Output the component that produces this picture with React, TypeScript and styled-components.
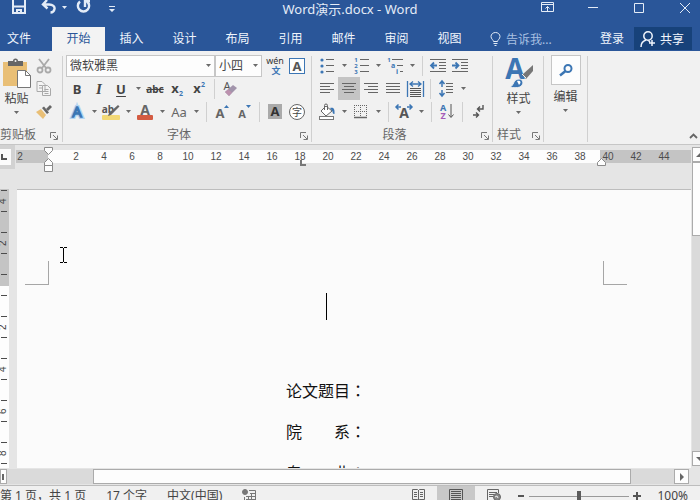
import React from "react";
import styled, { createGlobalStyle, css } from "styled-components";

const blue = "#2a5699";
const ink = "#444444";
const accent = "#3c76b4";
const line = "#c6c6c6";

const Global = createGlobalStyle`
  * { box-sizing: border-box; }
  html, body { margin: 0; padding: 0; }
  body, button, select, input {
    font-family: "Noto Sans", "Noto Sans CJK SC", sans-serif;
    font-size: 12px;
    color: ${ink};
  }
  button { border: 0; padding: 0; background: none; }
  svg { display: block; flex: none; overflow: visible; }
`;

const Window = styled.div`
  height: 100vh;
  display: flex;
  flex-direction: column;
  overflow: hidden;
  background: #e5e5e5;
`;

/* ---------- title bar ---------- */

const TitleBar = styled.header`
  display: grid;
  grid-template-columns: 1fr auto 1fr;
  height: 27px;
  flex: none;
  background: ${blue};
  overflow: hidden;
`;

const QuickAccess = styled.div`
  display: flex;
  height: 14px;
  gap: 9px;
  padding-left: 11px;
`;

const TitleButton = styled.button`
  display: flex;
  align-items: center;
  gap: 6px;
  height: 14px;
`;

const MoreButton = styled(TitleButton)`
  margin-left: 8px;
  padding-top: 4px;
`;

const Title = styled.h1`
  margin: 0;
  font-size: 13px;
  line-height: 19px;
  font-weight: 400;
  color: #e4ecf7;
`;

const WindowControls = styled.div`
  display: flex;
  justify-content: flex-end;
  margin-right: -8px;
`;

const ControlButton = styled.button`
  display: flex;
  justify-content: center;
  align-items: center;
  flex: none;
  width: 46px;
  height: 15px;
`;

/* ---------- tabs ---------- */

const TabBar = styled.nav`
  display: flex;
  align-items: stretch;
  height: 24px;
  flex: none;
  background: ${blue};
  padding-right: 8px;
`;

const Tab = styled.button<{ $active?: boolean; $file?: boolean }>`
  width: ${(p) => (p.$file ? 38 : 53)}px;
  margin-right: ${(p) => (p.$file ? 14 : 0)}px;
  flex: none;
  line-height: 22px;
  white-space: nowrap;
  color: ${(p) => (p.$active ? blue : "#f0f5fc")};
  background: ${(p) => (p.$active ? "#f3f3f3" : "transparent")};
`;

const TellMe = styled.label`
  display: flex;
  flex: 1;
  min-width: 0;
  align-items: center;
  gap: 5px;
  padding-left: 14px;
  color: #b4c8e6;
`;

const TellMeInput = styled.input`
  flex: 1;
  min-width: 0;
  border: 0;
  padding: 0;
  height: 20px;
  outline: none;
  background: none;
  color: #ffffff;
  &::placeholder { color: #a9c0e2; opacity: 1; }
`;

const SignIn = styled.button`
  flex: none;
  width: 44px;
  line-height: 22px;
  color: #f0f5fc;
`;

const Share = styled.button`
  display: flex;
  align-items: center;
  gap: 4px;
  flex: none;
  height: 23px;
  padding: 0 8px 0 6px;
  background: #17427a;
  color: #f0f5fc;
`;

/* ---------- ribbon ---------- */

const Ribbon = styled.section`
  display: flex;
  flex: none;
  height: 94px;
  padding: 3px 0 0;
  background: #f1f1f1;
  border-bottom: 1px solid ${line};
`;

const Group = styled.div<{ $w: number; $pad: number }>`
  display: flex;
  flex-direction: column;
  flex: none;
  width: ${(p) => p.$w}px;
  padding: 0 ${(p) => (p.$pad ? 0 : 1)}px 0 ${(p) => p.$pad}px;
  background: linear-gradient(#d0d0d0, #d0d0d0) right 2px / 1px 86px no-repeat;
`;

const GroupBody = styled.div`
  display: flex;
  height: 69px;
`;

const Rows = styled.div`
  display: flex;
  flex-direction: column;
`;

const Row = styled.div`
  display: flex;
  align-items: center;
  height: 23px;
`;

const GroupFooter = styled.div`
  display: flex;
  align-items: center;
  height: 20px;
  padding: 2px 4px 0 0;
  color: #666666;
  white-space: nowrap;
`;

const GroupName = styled.span<{ $center?: boolean }>`
  flex: 1;
  padding-right: ${(p) => (p.$center ? 8 : 0)}px;
  text-align: ${(p) => (p.$center ? "center" : "left")};
`;

const Launcher = styled.button`
  flex: none;
  padding-top: 4px;
`;

const Tool = styled.button<{ $on?: boolean }>`
  display: flex;
  align-items: center;
  justify-content: center;
  flex: none;
  width: 22px;
  height: 23px;
  background: ${(p) => (p.$on ? "#c4c4c4" : "transparent")};
`;

const CaretTool = styled(Tool)`
  width: 12px;
`;

const Divider = styled.i`
  flex: none;
  width: 1px;
  height: 20px;
  margin: 0 4px;
  background: #d0d0d0;
`;

const Combo = styled.label<{ $w: number }>`
  display: grid;
  align-items: center;
  flex: none;
  width: ${(p) => p.$w}px;
  height: 22px;
  margin-right: ${(p) => (p.$w < 60 ? 2 : 0)}px;
  & > * { grid-area: 1 / 1; }
  & > svg { justify-self: end; margin-right: 4px; pointer-events: none; }
`;

const ComboSelect = styled.select`
  appearance: none;
  width: 100%;
  height: 22px;
  border: 1px solid ${line};
  border-radius: 0;
  padding: 0 0 0 3px;
  background: #fdfdfd;
`;

const BigButton = styled.button<{ $w: number }>`
  display: flex;
  flex-direction: column;
  align-items: center;
  flex: none;
  width: ${(p) => p.$w}px;
  padding-top: 4px;
  line-height: 18px;
  white-space: nowrap;
`;

const BigLabel = styled.span`
  margin: 2px 0 3px;
`;

const FindBox = styled.span`
  display: flex;
  align-items: center;
  justify-content: center;
  width: 30px;
  height: 30px;
  margin: -3px 0 1px;
  border: 1px solid ${line};
  background: #fdfdfd;
`;

const Collapse = styled.button`
  align-self: flex-end;
  margin-left: auto;
  padding: 0 2px 5px 0;
`;

const letter = css`
  font-size: 13px;
  line-height: 20px;
  color: #444444;
`;
const Bold = styled.b`${letter}`;
const Italic = styled.i`${letter} font-family: "Liberation Serif", serif; font-weight: 700; font-size: 15px;`;
const Underline = styled.span`${letter} font-weight: 700; text-decoration: underline; text-underline-offset: 2px;`;
const Strike = styled.s`${letter} font-size: 10px; font-weight: 700;`;
const CaseLabel = styled.span`${letter} color: #666666;`;

/* ---------- workspace ---------- */

const Workspace = styled.main`
  display: flex;
  flex: 1;
  min-height: 0;
`;

const Editor = styled.div`
  display: flex;
  flex-direction: column;
  flex: 1;
  min-width: 0;
`;

const RulerBar = styled.div`
  display: flex;
  align-items: flex-start;
  height: 44px;
  flex: none;
`;

const TabStop = styled.button`
  display: flex;
  justify-content: flex-start;
  align-items: center;
  width: 15px;
  height: 24px;
  flex: none;
  margin-right: 1px;
  background: #fbfbfb;
  border: 4px solid #d2d2d2;
  border-left: 0;
`;

const Ruler = styled.div`
  position: relative;
  flex: 1;
  min-width: 0;
  height: 13px;
  margin-top: 5px;
  background: linear-gradient(90deg, #c4c4c4 32px, #fdfdfd 32px, #fdfdfd 584px, #c4c4c4 584px);
`;

const RulerScale = styled.div`
  display: flex;
  margin-left: -10px;
`;

const RulerMark = styled.span`
  flex: none;
  width: 28px;
  text-align: center;
  font: 10px/14px "Liberation Sans", sans-serif;
  color: #4c4c4c;
`;

const Marker = styled.svg<{ $x: number; $y: number }>`
  position: absolute;
  left: ${(p) => p.$x}px;
  top: ${(p) => p.$y}px;
`;

const PageRow = styled.div`
  display: flex;
  flex: 1;
  min-height: 0;
  gap: 8px;
  overflow: hidden;
`;

const SideRuler = styled.div`
  flex: none;
  width: 9px;
  overflow: hidden;
  background: linear-gradient(#c4c4c4 97px, #fdfdfd 97px);
`;

const SideScale = styled.div`
  margin-top: -9px;
`;

const SideMark = styled.div`
  display: flex;
  flex-direction: column;
  justify-content: space-between;
  height: 42px;
  padding: 10px 0;
  &::before, &::after {
    content: "";
    width: 6px;
    height: 1px;
    margin-left: 1px;
    background: #4c4c4c;
  }
`;

const SideNumber = styled.span`
  width: 12px;
  height: 10px;
  margin-left: -3px;
  writing-mode: vertical-rl;
  rotate: 180deg;
  text-align: center;
  font: 10px/12px "Liberation Sans", sans-serif;
`;

const Page = styled.article`
  position: relative;
  flex: 1;
  min-width: 0;
  overflow: hidden;
  background: #fbfbfb;
  border-top: 1px solid #bdbdbd;
  padding: 71px 0 0 8px;
`;

const Corners = styled.div`
  display: flex;
  gap: 554px;
`;

const Corner = styled.i<{ $side: "left" | "right" }>`
  flex: none;
  width: 24px;
  height: 24px;
  border: 0 solid #a6a6a6;
  border-bottom-width: 1px;
  ${(p) => (p.$side === "left" ? "border-right-width: 1px;" : "border-left-width: 1px;")}
`;

const TextArea = styled.div`
  width: 554px;
  margin-left: 24px;
  padding-top: 8px;
`;

const CaretLine = styled.div`
  display: flex;
  justify-content: center;
  height: 77px;
`;

const TextCaret = styled.i`
  width: 1px;
  height: 27px;
  background: #000000;
`;

const Paragraph = styled.p`
  margin: 0;
  height: 41px;
  padding-left: 237px;
  font-family: "Noto Sans CJK SC", sans-serif;
  font-size: 16px;
  line-height: 41px;
  white-space: pre;
  color: #111111;
`;

const Colon = styled.span`
  font-family: "Noto Sans CJK TC", sans-serif;
  line-height: 1;
`;

const Pointer = styled.svg`
  position: absolute;
  left: 43px;
  top: 57px;
`;

/* ---------- scroll bars ---------- */

const VScroll = styled.div`
  display: flex;
  flex-direction: column;
  width: 9px;
  flex: none;
  overflow: hidden;
  margin: 2px 0;
  background: #dadada;
  border-left: 1px solid #e5e5e5;
`;

const ScrollButton = styled.button<{ $w: number }>`
  display: flex;
  align-items: center;
  justify-content: center;
  flex: none;
  width: ${(p) => p.$w}px;
  height: 15px;
  background: #fdfdfd;
  border: 1px solid #ababab;
`;

const VThumb = styled.div`
  width: 16px;
  height: 74px;
  margin-bottom: auto;
  background: #fdfdfd;
  border: 1px solid #ababab;
`;

const HScroll = styled.div`
  display: flex;
  flex: none;
  height: 17px;
  padding: 1px 11px 1px 0;
  background: #e5e5e5;
`;

const HTrack = styled.div`
  flex: 1;
  padding: 0 43px 0 86px;
  background: #dadada;
`;

const HThumb = styled.div`
  height: 15px;
  background: #fdfdfd;
  border: 1px solid #ababab;
`;

/* ---------- status bar ---------- */

const StatusBar = styled.footer`
  display: flex;
  flex: none;
  height: 15px;
  overflow: hidden;
  border-top: 1px solid #bdbdbd;
  background: #f0f0f0;
  line-height: 20px;
  white-space: nowrap;
`;

const StatusItem = styled.button`
  flex: none;
  height: 20px;
  line-height: 20px;
  margin-right: 20px;
`;

const StatusRight = styled.div`
  display: flex;
  align-items: flex-start;
  margin-left: auto;
  padding-right: 12px;
`;

const ViewButton = styled.button<{ $on?: boolean }>`
  display: flex;
  justify-content: center;
  width: 38px;
  height: 20px;
  padding-top: 3px;
  background: ${(p) => (p.$on ? "#c8c8c8" : "transparent")};
`;

const ZoomButton = styled.button`
  display: flex;
  align-items: center;
  justify-content: center;
  width: 16px;
  height: 20px;
`;

const ZoomSlider = styled.input`
  appearance: none;
  width: 100px;
  height: 20px;
  margin: 0;
  background: linear-gradient(#9a9a9a, #9a9a9a) center / 100% 1px no-repeat;
  &::-webkit-slider-thumb {
    appearance: none;
    width: 4px;
    height: 11px;
    background: #5c5c5c;
  }
`;

const ZoomValue = styled.button`
  width: 43px;
  height: 20px;
  line-height: 20px;
  text-align: right;
`;

/* ---------- drawings ---------- */

const Caret = ({ color = "#6a6a6a" }: { color?: string }) => (
  <svg width="5" height="3" viewBox="0 0 5 3"><path d="M0 0h5L2.5 3z" fill={color} /></svg>
);

const LauncherIcon = () => (
  <svg width="8" height="8" viewBox="0 0 8 8" fill="none" stroke="#777">
    <path d="M.5 6V.5H6M3 3l4 4M7.5 3.5v4h-4" />
  </svg>
);

const Drop = ({ label }: { label: string }) => (
  <CaretTool aria-label={label}><Caret /></CaretTool>
);

const Lines = ({ rows }: { rows: [number, number][] }) => (
  <svg width="16" height="11" viewBox="0 0 16 11" stroke="#666">
    {rows.map(([a, b], i) => <path key={i} d={`M${a} ${i * 3 + 0.5}H${b}`} />)}
  </svg>
);

const SvgLetter = ({ x, y, size, fill = "#555", bold = true, children }: {
  x: number; y: number; size: number; fill?: string; bold?: boolean; children: string;
}) => (
  <text x={x} y={y} fontSize={size} fill={fill} fontWeight={bold ? 700 : 400} textAnchor="middle">{children}</text>
);

const PasteIcon = () => (
  <svg width="30" height="30" viewBox="0 0 30 30">
    <rect x="1" y="4" width="24" height="24" fill="#e9bf76" />
    <path d="M6 3h5a2.500 2.500 0 0 1 5 0h5v5H6z" fill="#666" />
    <circle cx="13.500" cy="3" r="1" fill="#f1f1f1" />
    <path d="M15.500 12.500h8l5 5v12h-13z" fill="#fff" stroke="#777" />
    <path d="M23.500 12.500v5h5" fill="none" stroke="#777" />
  </svg>
);

const CutIcon = () => (
  <svg width="16" height="16" viewBox="0 0 16 16" fill="none" stroke="#a9a9a9" strokeWidth="1.800">
    <path d="M3 1l7 9M13 1L6 10" /><circle cx="4" cy="12" r="2.500" /><circle cx="12" cy="12" r="2.500" />
  </svg>
);

const CopyIcon = () => (
  <svg width="16" height="15" viewBox="0 0 16 15" fill="#f4f4f4" stroke="#a9a9a9">
    <path d="M1 .5h5l3 3v7H1zM6.500 4.500h5l3 3v7h-8z" />
    <path d="M3 4.500h3M3 7h3M8.500 8.500h4M8.500 10.500h4M8.500 12.500h4" />
  </svg>
);

const PainterIcon = () => (
  <svg width="16" height="15" viewBox="0 0 16 15">
    <path d="M0 8l5-3 5 6-3 4z" fill="#e9bf76" />
    <path d="M6 4l2-1.500 5 6L11 10z" fill="#666" /><path d="M10 5l4-4 2 2-4 4z" fill="#666" />
  </svg>
);

const PhoneticIcon = () => (
  <svg width="18" height="18" viewBox="0 0 18 18">
    <SvgLetter x={9} y={7} size={9} fill="#333" bold={false}>wén</SvgLetter>
    <SvgLetter x={10} y={17} size={9} fill={accent}>文</SvgLetter>
  </svg>
);

const BoxedA = () => (
  <svg width="16" height="16" viewBox="0 0 16 16">
    <rect x=".5" y=".5" width="15" height="15" fill="#fdfdfd" stroke={accent} />
    <SvgLetter x={8} y={13} size={13}>A</SvgLetter>
  </svg>
);

const Script = ({ sup }: { sup?: boolean }) => (
  <svg width="14" height="14" viewBox="0 0 14 14">
    <SvgLetter x={5} y={11} size={13} fill="#444">x</SvgLetter>
    <SvgLetter x={11} y={sup ? 5 : 14} size={7} fill={accent}>2</SvgLetter>
  </svg>
);

const ClearIcon = () => (
  <svg width="16" height="16" viewBox="0 0 16 16">
    <SvgLetter x={5} y={9} size={11} bold={false}>A</SvgLetter>
    <path d="M3 11l8-7 4 3-8 8z" fill="#a294ab" /><path d="M3 11l3-2.500 4 3L7 15z" fill="#bc91ae" />
  </svg>
);

const EffectA = () => (
  <svg width="18" height="18" viewBox="0 0 18 18">
    <text x="9" y="14" fontSize="15" textAnchor="middle" fill="#fff" stroke="#b4d4f2" strokeWidth="4">A</text>
    <text x="9" y="14" fontSize="15" textAnchor="middle" fill="#fff" stroke={accent} strokeWidth="1.400">A</text>
  </svg>
);

const HighlightIcon = () => (
  <svg width="18" height="18" viewBox="0 0 18 18">
    <rect x="0" y="12" width="18" height="5" rx="1" fill="#f2d875" />
    <SvgLetter x={6} y={10} size={10}>ab</SvgLetter>
    <path d="M16 2l1.500 1.500L9 12l-3 1 1-3z" fill="#666" />
  </svg>
);

const FontColorIcon = () => (
  <svg width="16" height="18" viewBox="0 0 16 18">
    <SvgLetter x={8} y={12} size={14} fill="#666">A</SvgLetter>
    <rect x="0" y="12" width="16" height="5" rx="1" fill="#d35b42" />
  </svg>
);

const SizeA = ({ up }: { up?: boolean }) => (
  <svg width="14" height="16" viewBox="0 0 14 16">
    <SvgLetter x={5} y={14} size={up ? 13 : 11} fill="#666">A</SvgLetter>
    <path d={up ? "M9 4h5l-2.500-3z" : "M9 1h5l-2.500 3z"} fill={accent} />
  </svg>
);

const ShadedA = () => (
  <svg width="14" height="15" viewBox="0 0 14 15">
    <rect width="14" height="15" fill="#aaa" /><SvgLetter x={7} y={12} size={13} fill="#333">A</SvgLetter>
  </svg>
);

const CircledZi = () => (
  <svg width="16" height="16" viewBox="0 0 16 16">
    <circle cx="8" cy="8" r="7.500" fill="#fff" stroke="#666" />
    <SvgLetter x={8} y={12} size={10} fill="#444" bold={false}>字</SvgLetter>
  </svg>
);

const BulletsIcon = () => (
  <svg width="14" height="16" viewBox="0 0 14 16">
    {[2, 8, 14].map((y) => <g key={y}><circle cx="2" cy={y} r="1.600" fill={accent} /><path d={`M6 ${y - 0.5}h8`} stroke="#666" /></g>)}
  </svg>
);

const NumberingIcon = () => (
  <svg width="15" height="16" viewBox="0 0 15 16">
    {[2, 8, 14].map((y, i) => (
      <g key={y}><SvgLetter x={2} y={y + 2} size={6} fill={accent}>{String(i + 1)}</SvgLetter><path d={`M6 ${y - 0.5}h9`} stroke="#666" /></g>
    ))}
  </svg>
);

const MultilevelIcon = () => (
  <svg width="16" height="16" viewBox="0 0 16 16">
    <SvgLetter x={2} y={4} size={6} fill={accent}>1</SvgLetter>
    <SvgLetter x={6} y={10} size={7} fill={accent}>a</SvgLetter>
    <SvgLetter x={10} y={16} size={7} fill={accent}>i</SvgLetter>
    <path d="M5 1.500h11M10 7.500h6M13 13.500h3" stroke="#666" />
  </svg>
);

const IndentIcon = ({ out }: { out?: boolean }) => (
  <svg width="16" height="14" viewBox="0 0 16 14" fill="none">
    <path d="M0 .5h16M9 3.500h7M9 6.500h7M9 9.500h7M0 12.500h16" stroke="#666" />
    <path d={out ? "M7 6.500H1M4 3.500l-3 3 3 3" : "M0 6.500h6M3.500 3.500l3 3-3 3"} stroke={accent} strokeWidth="1.800" />
  </svg>
);

const DistributeIcon = () => (
  <svg width="17" height="16" viewBox="0 0 17 16" fill="none">
    <path d="M.5 0v16M16.500 0v16M3 3h11M6 .5L3 3l3 2.500M11 .5L14 3l-3 2.500" stroke={accent} strokeWidth="1.300" />
    <path d="M3 7.500h11M3 9.500h11M3 11.500h11M3 13.500h11M3 15.500h11" stroke="#555" />
  </svg>
);

const SpacingIcon = () => (
  <svg width="14" height="17" viewBox="0 0 14 17" fill="none">
    <path d="M3 1v6M.5 4L3 1l2.500 3M3 10v6M.5 13L3 16l2.500-3" stroke={accent} strokeWidth="1.500" />
    <path d="M7 3.500h7M7 6.500h7M7 9.500h7M7 12.500h7" stroke="#666" />
  </svg>
);

const ShadingIcon = () => (
  <svg width="16" height="16" viewBox="0 0 16 16" fill="none">
    <path d="M7 2l6 5-6 5-5-5z" fill="#fff" stroke="#666" /><path d="M5.500 6V1.500a1.500 1.500 0 0 1 3 0V6" stroke="#666" />
    <path d="M11 4c3-1 5 0 4.500 6-1 0-2-.5-2-2.500z" fill={accent} />
    <rect x=".5" y="12.500" width="14" height="3" fill="#fff" stroke="#777" />
  </svg>
);

const BordersIcon = () => (
  <svg width="14" height="14" viewBox="0 0 14 14" fill="none" stroke="#666">
    <path d="M.5 0v12M6.500 0v12M12.500 0v12M0 .5h13M0 6.500h13" strokeDasharray="1 1" /><path d="M0 12.500h13" strokeWidth="1.500" />
  </svg>
);

const ScaleAIcon = () => (
  <svg width="16" height="16" viewBox="0 0 16 16">
    <SvgLetter x={8} y={14} size={14} fill="#555">A</SvgLetter>
    <path d="M5 3H0M2.500 .5L0 3l2.500 2.500M11 3h5M13.500.5L16 3l-2.500 2.500" fill="none" stroke={accent} strokeWidth="1.500" />
  </svg>
);

const SortIcon = () => (
  <svg width="14" height="17" viewBox="0 0 14 17">
    <SvgLetter x={3} y={8} size={9} fill={accent}>A</SvgLetter>
    <SvgLetter x={3} y={16} size={9} fill="#a45bb8">Z</SvgLetter>
    <path d="M11 1v13M8.500 11.500L11 14.500l2.500-3" fill="none" stroke="#555" />
  </svg>
);

const MarksIcon = () => (
  <svg width="11" height="13" viewBox="0 0 11 13" fill="none" stroke="#555" strokeWidth="1.400">
    <path d="M10 0v4H5M7 1.500L4.500 4 7 6.500M0 10h5M3 7.500L5.500 10 3 12.500" />
  </svg>
);

const StylesIcon = () => (
  <svg width="28" height="30" viewBox="0 0 28 30">
    <SvgLetter x={10} y={21} size={28} fill={accent}>A</SvgLetter>
    <path d="M28 7v6l-7 8-4-4z" fill="#777" />
    <path d="M17 16l4 4" stroke="#f1f1f1" />
    <path d="M5 29c4-1 3-8 9-8 5 0 5 6 1 8-3 1-7 1-10 0z" fill={accent} stroke="#f1f1f1" />
    <path d="M12 23c3-1 5 1 2 4" fill="#fff" />
  </svg>
);

const FindIcon = () => (
  <svg width="14" height="12" viewBox="0 0 14 12" fill="none" stroke={accent} strokeWidth="2">
    <circle cx="9" cy="4.500" r="3.500" /><path d="M6.500 7L1 11.500" strokeWidth="2.500" />
  </svg>
);

const scale = ["2", "", ...Array.from({ length: 22 }, (_, i) => String(i * 2 + 2))];
const sideScale = ["4", "2", "", "2", "4", "6", "8"];
const tabs = ["插入", "设计", "布局", "引用", "邮件", "审阅", "视图"];

const L: Record<string, [number, number][]> = {
  left: [[1, 15], [1, 11], [1, 15], [1, 11]],
  center: [[1, 15], [3, 13], [1, 15], [3, 13]],
  right: [[1, 15], [5, 15], [1, 15], [5, 15]],
  justify: [[1, 15], [1, 15], [1, 15], [1, 15]],
};

export default function App() {
  return (
    <Window>
      <Global />
      <TitleBar>
        <QuickAccess>
          <TitleButton aria-label="保存">
            <svg width="15" height="14" viewBox="0 0 15 14" fill="none" stroke="#e4ecf7" strokeWidth="2">
              <path d="M2 0v13h12V0M2 6.500h12" /><path d="M6 13v-3h4v3" />
            </svg>
          </TitleButton>
          <TitleButton aria-label="撤消">
            <svg width="21" height="14" viewBox="0 0 21 14" fill="none" stroke="#e4ecf7" strokeWidth="2.400">
              <path d="M12 0L8 4.500l4.500 4M8 4.500h6c4 0 6 2 5.500 4.500-.5 2.500-2 3.500-4 3.500" />
            </svg>
            <Caret color="#e4ecf7" />
          </TitleButton>
          <TitleButton aria-label="恢复">
            <svg width="16" height="14" viewBox="0 0 16 14" fill="none" stroke="#e4ecf7" strokeWidth="2.400">
              <path d="M4 1.500A5.600 5.600 0 1 0 11 1.500M9 7V1h5" />
            </svg>
          </TitleButton>
          <MoreButton aria-label="自定义快速访问工具栏">
            <svg width="6" height="7" viewBox="0 0 6 7"><path d="M0 0h6v1H0zM0 3h6L3 6z" fill="#e4ecf7" /></svg>
          </MoreButton>
        </QuickAccess>
        <Title>Word演示.docx - Word</Title>
        <WindowControls>
          <ControlButton aria-label="功能区显示选项">
            <svg width="13" height="11" viewBox="0 0 13 11" fill="none" stroke="#e4ecf7">
              <path d="M.5.5h12v9H.5zM.5 2.500h12M6.500 9V4.500M4.500 6.500l2-2 2 2" />
            </svg>
          </ControlButton>
          <ControlButton aria-label="最小化">
            <svg width="10" height="1" viewBox="0 0 10 1"><path d="M0 .5h10" stroke="#e4ecf7" /></svg>
          </ControlButton>
          <ControlButton aria-label="最大化">
            <svg width="10" height="10" viewBox="0 0 10 10"><path d="M.5.5h9v9h-9z" fill="none" stroke="#e4ecf7" /></svg>
          </ControlButton>
          <ControlButton aria-label="关闭">
            <svg width="10" height="10" viewBox="0 0 10 10"><path d="M0 0l10 10M10 0L0 10" stroke="#e4ecf7" /></svg>
          </ControlButton>
        </WindowControls>
      </TitleBar>

      <TabBar>
        <Tab $file>文件</Tab>
        <Tab $active>开始</Tab>
        {tabs.map((t) => <Tab key={t}>{t}</Tab>)}
        <TellMe>
          <svg width="11" height="14" viewBox="0 0 11 14" fill="none" stroke="#e4ecf7">
            <path d="M3.500 9.500C3.500 8 1 7 1 4.500a4.500 4 0 0 1 9 0C10 7 7.500 8 7.500 9.500zM3.500 11.500h4M4.500 13.500h2" />
          </svg>
          <TellMeInput placeholder="告诉我..." aria-label="告诉我" />
        </TellMe>
        <SignIn>登录</SignIn>
        <Share>
          <svg width="16" height="16" viewBox="0 0 16 16" fill="none" stroke="#f0f5fc" strokeWidth="1.500">
            <circle cx="8" cy="5" r="4.200" /><path d="M1 16c0-4 2-6 5-7M8.500 9.500l1.500 1.500M12 9v6M9 12h6" />
          </svg>
          共享
        </Share>
      </TabBar>

      <Ribbon>
        <Group $w={63} $pad={0}>
          <GroupBody>
            <BigButton $w={33}>
              <PasteIcon /><BigLabel>粘贴</BigLabel><Caret />
            </BigButton>
            <Rows>
              <Row><Tool aria-label="剪切"><CutIcon /></Tool></Row>
              <Row><Tool aria-label="复制"><CopyIcon /></Tool></Row>
              <Row><Tool aria-label="格式刷"><PainterIcon /></Tool></Row>
            </Rows>
          </GroupBody>
          <GroupFooter>
            <GroupName>剪贴板</GroupName>
            <Launcher aria-label="剪贴板选项"><LauncherIcon /></Launcher>
          </GroupFooter>
        </Group>

        <Group $w={249} $pad={3}>
          <GroupBody>
            <Rows>
              <Row>
                <Combo $w={149}>
                  <ComboSelect aria-label="字体"><option>微软雅黑</option></ComboSelect><Caret />
                </Combo>
                <Combo $w={47}>
                  <ComboSelect aria-label="字号"><option>小四</option></ComboSelect><Caret />
                </Combo>
                <Tool aria-label="拼音指南"><PhoneticIcon /></Tool>
                <Tool aria-label="字符边框"><BoxedA /></Tool>
              </Row>
              <Row>
                <Tool><Bold>B</Bold></Tool>
                <Tool><Italic>I</Italic></Tool>
                <Tool><Underline>U</Underline></Tool>
                <Drop label="下划线选项" />
                <Tool><Strike>abc</Strike></Tool>
                <Tool aria-label="下标"><Script /></Tool>
                <Tool aria-label="上标"><Script sup /></Tool>
                <Divider />
                <Tool aria-label="清除格式"><ClearIcon /></Tool>
              </Row>
              <Row>
                <Tool aria-label="文本效果"><EffectA /></Tool>
                <Drop label="文本效果选项" />
                <Tool aria-label="突出显示"><HighlightIcon /></Tool>
                <Drop label="突出显示选项" />
                <Tool aria-label="字体颜色"><FontColorIcon /></Tool>
                <Drop label="字体颜色选项" />
                <Tool><CaseLabel>Aa</CaseLabel></Tool>
                <Drop label="更改大小写" />
                <Divider />
                <Tool aria-label="增大字号"><SizeA up /></Tool>
                <Tool aria-label="减小字号"><SizeA /></Tool>
                <Divider />
                <Tool aria-label="字符底纹"><ShadedA /></Tool>
                <Tool aria-label="带圈字符"><CircledZi /></Tool>
              </Row>
            </Rows>
          </GroupBody>
          <GroupFooter>
            <GroupName $center>字体</GroupName>
            <Launcher aria-label="字体选项"><LauncherIcon /></Launcher>
          </GroupFooter>
        </Group>

        <Group $w={181} $pad={4}>
          <GroupBody>
            <Rows>
              <Row>
                <Tool aria-label="项目符号"><BulletsIcon /></Tool>
                <Drop label="项目符号选项" />
                <Tool aria-label="编号"><NumberingIcon /></Tool>
                <Drop label="编号选项" />
                <Tool aria-label="多级列表"><MultilevelIcon /></Tool>
                <Drop label="多级列表选项" />
                <Divider />
                <Tool aria-label="减少缩进量"><IndentIcon out /></Tool>
                <Tool aria-label="增加缩进量"><IndentIcon /></Tool>
              </Row>
              <Row>
                <Tool aria-label="左对齐"><Lines rows={L.left} /></Tool>
                <Tool aria-label="居中" $on><Lines rows={L.center} /></Tool>
                <Tool aria-label="右对齐"><Lines rows={L.right} /></Tool>
                <Tool aria-label="两端对齐"><Lines rows={L.justify} /></Tool>
                <Tool aria-label="分散对齐"><DistributeIcon /></Tool>
                <Divider />
                <Tool aria-label="行距"><SpacingIcon /></Tool>
                <Drop label="行距选项" />
              </Row>
              <Row>
                <Tool aria-label="底纹"><ShadingIcon /></Tool>
                <Drop label="底纹选项" />
                <Tool aria-label="边框"><BordersIcon /></Tool>
                <Drop label="边框选项" />
                <Divider />
                <Tool aria-label="中文版式"><ScaleAIcon /></Tool>
                <Drop label="中文版式选项" />
                <Divider />
                <Tool aria-label="排序"><SortIcon /></Tool>
                <Divider />
                <Tool aria-label="显示编辑标记"><MarksIcon /></Tool>
              </Row>
            </Rows>
          </GroupBody>
          <GroupFooter>
            <GroupName $center>段落</GroupName>
            <Launcher aria-label="段落选项"><LauncherIcon /></Launcher>
          </GroupFooter>
        </Group>

        <Group $w={51} $pad={4}>
          <GroupBody>
            <BigButton $w={43}>
              <StylesIcon /><BigLabel>样式</BigLabel><Caret />
            </BigButton>
          </GroupBody>
          <GroupFooter>
            <GroupName>样式</GroupName>
            <Launcher aria-label="样式选项"><LauncherIcon /></Launcher>
          </GroupFooter>
        </Group>

        <Group $w={44} $pad={0}>
          <GroupBody>
            <BigButton $w={43}>
              <FindBox><FindIcon /></FindBox><BigLabel>编辑</BigLabel><Caret />
            </BigButton>
          </GroupBody>
        </Group>

        <Collapse aria-label="折叠功能区">
          <svg width="9" height="6" viewBox="0 0 9 6"><path d="M1 5l3.500-3.500L8 5" fill="none" stroke="#666" strokeWidth="1.800" /></svg>
        </Collapse>
      </Ribbon>

      <Workspace>
        <Editor>
          <RulerBar>
            <TabStop aria-label="制表符">
              <svg width="7" height="8" viewBox="0 0 7 8"><path d="M2 1v5h5" fill="none" stroke="#555" strokeWidth="2" /></svg>
            </TabStop>
            <Ruler>
              <RulerScale>{scale.map((n, i) => <RulerMark key={i}>{n}</RulerMark>)}</RulerScale>
              <Marker $x={28} $y={-3} width="9" height="25" viewBox="0 0 9 25" fill="#fdfdfd" stroke="#8a8a8a">
                <path d="M.5.5h8v3l-4 4-4-4zM.5 18.500v-3l4-4 4 4v3zM.5 18.500h8v6h-8z" />
              </Marker>
              <Marker $x={284} $y={10} width="6" height="6" viewBox="0 0 6 6"><path d="M1 0v5h5" fill="none" stroke="#777" strokeWidth="2" /></Marker>
              <Marker $x={581} $y={8} width="9" height="8" viewBox="0 0 9 8" fill="#fdfdfd" stroke="#8a8a8a">
                <path d="M.5 7.500v-3l4-4 4 4v3z" />
              </Marker>
            </Ruler>
          </RulerBar>
          <PageRow>
            <SideRuler>
              <SideScale>
                {sideScale.map((n, i) => <SideMark key={i}><SideNumber>{n}</SideNumber></SideMark>)}
              </SideScale>
            </SideRuler>
            <Page>
              <Corners><Corner $side="left" /><Corner $side="right" /></Corners>
              <TextArea>
                <CaretLine><TextCaret /></CaretLine>
                <Paragraph>论文题目<Colon>：</Colon></Paragraph>
                <Paragraph>院　　系<Colon>：</Colon></Paragraph>
                <Paragraph>专　　业<Colon>：</Colon></Paragraph>
              </TextArea>
              <Pointer width="7" height="16" viewBox="0 0 7 16" fill="none" stroke="#000">
                <path d="M0 .5h3M4 .5h3M3.500 1v14M0 15.500h3M4 15.500h3" />
              </Pointer>
            </Page>
          </PageRow>
        </Editor>
        <VScroll>
          <ScrollButton $w={16} aria-label="向上滚动">
            <svg width="8" height="4" viewBox="0 0 8 4"><path d="M0 4h8L4 0z" fill="#666" /></svg>
          </ScrollButton>
          <VThumb />
          <ScrollButton $w={16} aria-label="向下滚动">
            <svg width="8" height="4" viewBox="0 0 8 4"><path d="M0 0h8L4 4z" fill="#666" /></svg>
          </ScrollButton>
        </VScroll>
      </Workspace>

      <HScroll>
        <ScrollButton $w={7} aria-label="向左滚动">
          <svg width="4" height="8" viewBox="0 0 4 8"><path d="M1 1v6" stroke="#666" strokeWidth="2" /></svg>
        </ScrollButton>
        <HTrack><HThumb /></HTrack>
        <ScrollButton $w={15} aria-label="向右滚动">
          <svg width="4" height="8" viewBox="0 0 4 8"><path d="M0 0v8l4-4z" fill="#666" /></svg>
        </ScrollButton>
      </HScroll>

      <StatusBar>
        <StatusItem>第 1 页，共 1 页</StatusItem>
        <StatusItem>17 个字</StatusItem>
        <StatusItem>中文(中国)</StatusItem>
        <StatusItem aria-label="宏录制">
          <svg width="14" height="14" viewBox="0 0 14 14" fill="none" stroke="#777">
            <path d="M7 1.500h6.500v12h-11V8M4 7.500h9M4 10.500h9M6.500 7v7M9.500 5v9M8 4.500h5" /><circle cx="3" cy="3" r="2.500" fill="#777" />
          </svg>
        </StatusItem>
        <StatusRight>
          <ViewButton aria-label="阅读视图">
            <svg width="13" height="12" viewBox="0 0 13 12" fill="none" stroke="#666">
              <path d="M.5.5h5l1 1 1-1h5v10h-5l-1 1-1-1h-5zM6.500 1v11M2 3.500h3M2 5.500h3M2 7.500h3M8 3.500h3M8 5.500h3M8 7.500h3" />
            </svg>
          </ViewButton>
          <ViewButton $on aria-label="页面视图">
            <svg width="14" height="12" viewBox="0 0 14 12" fill="none" stroke="#555">
              <path d="M.5.5h13v13H.5zM2 2.500h10M2 4.500h10M2 6.500h10M2 8.500h10M2 10.500h10" />
            </svg>
          </ViewButton>
          <ViewButton aria-label="Web 版式视图">
            <svg width="14" height="12" viewBox="0 0 14 12" fill="none" stroke="#666">
              <path d="M6 11.500H.5V.5h11V4M2 3.500h8M2 5.500h5M2 7.500h4" /><circle cx="10" cy="8" r="3.500" fill="#888" /><path d="M8 8l2-1 1 2" stroke="#eee" />
            </svg>
          </ViewButton>
          <ZoomButton aria-label="缩小"><svg width="6" height="2" viewBox="0 0 6 2"><path d="M0 1h6" stroke="#555" strokeWidth="2" /></svg></ZoomButton>
          <ZoomSlider type="range" aria-label="缩放" defaultValue={50} />
          <ZoomButton aria-label="放大"><svg width="8" height="8" viewBox="0 0 8 8"><path d="M0 4h8M4 0v8" stroke="#555" strokeWidth="2" /></svg></ZoomButton>
          <ZoomValue>100%</ZoomValue>
        </StatusRight>
      </StatusBar>
    </Window>
  );
}
